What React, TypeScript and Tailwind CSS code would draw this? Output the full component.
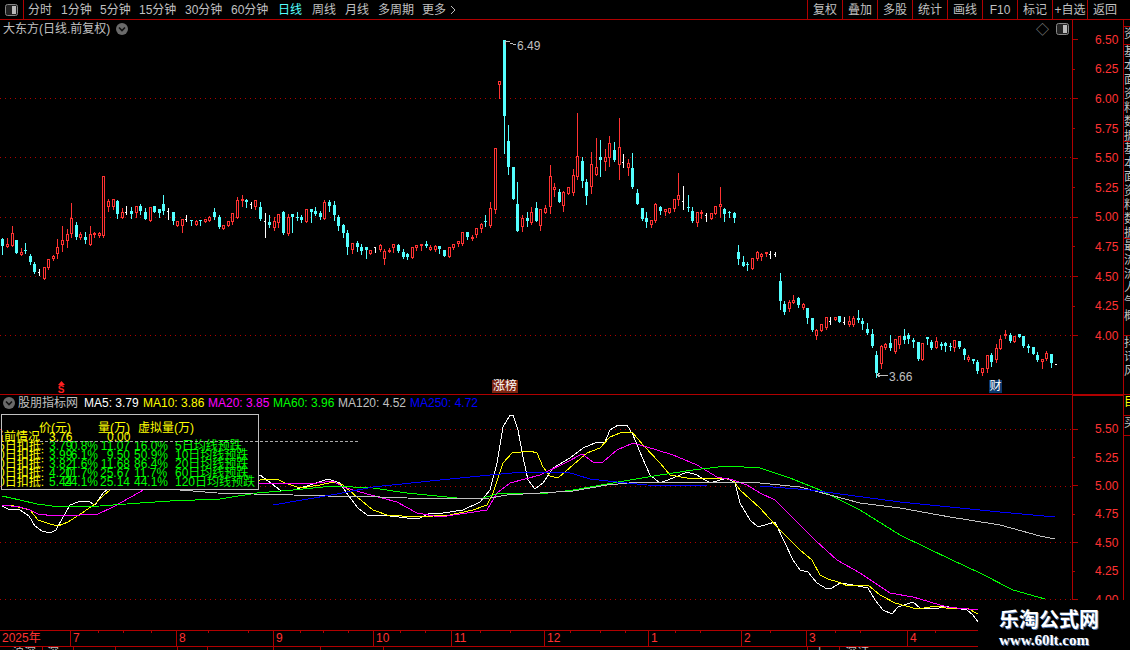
import React from 'react';

type Row = { label: string; price: string; pct: string; vol: string; pct2: string; name: string };

// one candle per line group: type wickTop bodyTop bodyBottom wickBottom (page pixels)
const candleData = `c 238 239 246 254|r 238 244 247 247|r 226 233 246 246|c 240 240 253 253|r 248 252 255 255|c 243 250 251 253|c 254 256 262 264|c 262 264 272 273|w 269 272 272 275|r 267 267 279 279
r 259 259 268 269|r 255 256 259 260|r 239 247 254 258|r 226 240 245 251|r 229 234 241 247|r 203 218 234 237|c 222 225 237 239|r 232 234 238 239|c 232 237 240 243|r 226 234 245 245
r 232 233 235 237|r 232 233 236 237|r 176 176 236 237|r 199 201 207 211|r 199 199 207 209|c 200 201 214 218|r 208 212 218 218|w 206 212 212 214|c 207 211 214 218|r 206 206 213 217
c 204 206 211 214|c 208 212 219 219|r 207 207 221 221|c 206 206 212 212|c 209 209 213 217|c 195 204 211 214|w 208 211 211 219|c 212 212 221 224|r 221 221 226 226|r 219 219 226 232
w 215 219 219 221|c 220 220 221 225|r 220 221 225 225|c 220 220 221 225|r 219 219 222 222|r 216 217 221 221|c 208 212 217 219|c 215 217 227 228|r 225 225 229 229|r 221 221 226 226
r 213 213 222 224|r 197 200 218 218|r 195 199 201 206|c 199 200 202 207|w 202 204 204 208|r 200 200 207 209|c 202 207 219 220|w 213 221 221 237|c 215 222 225 227|r 217 221 228 230
r 214 214 223 227|c 211 212 233 234|r 214 217 234 235|c 214 214 217 232|c 212 217 218 220|c 215 217 220 222|r 209 209 222 222|c 209 209 212 222|c 207 211 214 215|c 211 213 217 219
r 200 202 219 219|c 200 202 206 211|c 201 205 215 220|c 215 217 226 230|c 224 225 233 237|c 230 233 247 254|r 243 243 250 253|c 241 243 247 251|c 244 247 251 254|c 247 247 250 258
r 250 250 254 254|w 247 247 248 252|r 244 245 250 251|r 249 251 259 264|r 248 250 252 252|r 244 244 248 252|c 244 245 251 252|c 249 252 257 258|c 253 254 257 259|r 247 247 258 258
r 245 245 248 250|r 244 244 246 250|c 241 244 246 247|r 245 247 250 250|r 245 246 250 251|c 246 246 249 253|c 250 250 256 256|r 247 247 257 257|r 244 244 248 249|r 241 241 244 246
r 232 232 244 245|c 232 232 237 239|r 235 237 239 240|r 228 228 235 237|r 223 224 229 232|c 215 221 222 226|r 202 208 226 227|r 148 148 210 213|r 81 81 85 98|c 40 40 116 153
c 125 141 167 174|c 167 167 199 199|c 182 204 231 231|r 215 218 227 231|c 212 218 221 226|r 207 212 223 224|c 202 208 221 221|r 209 209 226 230|r 205 208 213 213|r 165 176 207 213
r 183 187 190 196|c 189 192 202 202|r 191 192 206 211|r 187 187 194 194|r 169 175 193 195|r 113 156 177 179|c 157 161 181 187|c 179 182 196 204|r 152 164 187 193|r 138 167 175 175
c 140 157 160 176|r 149 157 162 170|r 136 143 158 166|c 142 150 160 161|r 118 147 165 179|w 154 162 162 167|r 159 163 168 175|c 153 168 187 188|c 189 193 204 204|c 208 208 219 220
c 212 218 222 227|r 220 220 225 227|r 203 204 221 222|c 206 207 211 214|r 209 209 212 215|r 208 208 213 213|r 199 199 209 211|r 173 195 200 205|w 186 201 201 209|c 195 207 208 211
c 207 211 221 222|r 212 212 223 226|r 210 212 214 218|w 213 215 215 221|r 213 213 219 219|r 206 206 214 214|r 187 204 207 217|c 208 209 214 221|c 211 212 213 217|c 212 213 218 222
c 245 252 259 264|c 256 262 266 266|c 262 264 265 270|r 258 258 269 269|r 251 252 259 260|r 253 254 257 260|r 252 252 254 256|w 251 254 254 258|w 252 254 254 256|c 273 281 301 309
c 301 304 312 314|r 300 302 309 311|r 295 300 303 303|c 297 298 305 307|r 303 304 308 309|c 308 308 318 323|c 318 318 330 331|r 329 330 336 339|r 324 324 331 331|r 317 317 328 329
w 317 321 321 324|r 317 317 320 320|c 316 316 322 322|w 317 322 323 324|r 316 321 325 326|r 316 318 325 326|c 310 318 320 322|c 318 321 324 329|c 323 329 333 334|c 329 334 346 347
c 351 355 373 377|r 345 346 364 368|r 343 344 348 349|c 335 343 348 350|r 339 339 352 353|r 336 336 345 348|c 329 336 340 343|c 333 335 339 343|c 338 340 342 347|c 342 342 359 360
r 343 343 360 360|c 337 337 339 344|c 340 342 348 349|r 337 341 348 348|c 342 344 346 349|c 342 343 346 351|c 343 346 347 350|r 340 340 348 351|c 341 341 347 348|c 348 349 355 359
r 355 357 360 361|c 359 359 361 363|c 360 362 371 373|r 368 368 373 375|r 355 355 369 372|c 353 355 362 366|r 344 348 360 362|r 335 339 349 349|r 330 334 336 338|c 333 335 341 342
r 336 336 342 342|c 334 334 337 337|c 336 336 346 347|c 344 346 348 352|c 347 347 354 354|c 352 355 360 361|r 359 359 362 368|r 351 353 359 360|c 354 354 363 367|w 364 364 364 364`;

const candles = candleData
  .split(/[|\n]/)
  .map((c) => c.trim().split(' '))
  .map(([type, hi, top, bottom, lo], i) => ({
    type,
    x: Math.round(2.3 + 4.6 * i),
    hi: +hi,
    top: +top,
    bottom: +bottom,
    lo: +lo,
  }));

const lines: { color: string; points: string }[] = [
  {
    color: '#ffffff',
    points:
      '2,506 8,509 20,510 29,516 35,526 42,531 50,533 56,530 62,519 70,505 78,502 88,501 95,505 103,493 120,480 260,475 280,490 290,491 310,485 328,479 340,483 348,495 358,508 367,515 390,516 407,518 420,518 430,513 443,513 463,510 480,502 490,490 497,463 503,427 510,415 513,415 518,430 523,457 528,480 535,489 543,483 553,468 570,458 583,448 595,443 605,442 610,430 618,425 627,425 633,435 642,457 650,475 660,483 673,478 687,472 697,475 710,483 727,478 735,483 740,503 750,520 758,527 775,522 793,560 800,570 808,572 817,583 827,589 832,588 840,583 853,585 868,588 875,600 883,610 892,614 898,607 913,602 920,608 937,609 943,606 967,610 973,615 978,622',
  },
  {
    color: '#ffff00',
    points:
      '2,505 10,505 30,510 38,520 50,524 58,526 68,522 82,513 95,504 103,496 110,490 125,480 260,480 277,479 285,483 300,488 320,485 333,482 343,485 357,497 373,510 387,515 417,517 450,515 473,510 487,505 493,493 503,463 512,453 530,451 537,453 543,467 550,476 558,478 573,465 587,453 600,448 610,437 620,433 632,432 643,445 660,463 670,475 687,478 720,478 733,480 740,490 760,508 780,530 800,550 812,560 820,575 828,579 838,582 848,586 868,585 880,595 895,603 917,609 937,606 950,609 967,608 978,614',
  },
  {
    color: '#ff00ff',
    points:
      '2,505 20,507 30,510 38,514 55,516 80,515 98,514 113,507 140,492 155,482 260,484 290,483 317,483 333,481 343,487 367,494 397,502 417,513 440,517 467,513 487,510 497,493 510,483 540,475 567,462 582,454 593,462 603,462 617,450 633,443 657,450 673,455 697,465 717,477 733,480 747,485 760,493 775,500 790,515 815,540 837,560 860,573 890,593 913,597 947,607 978,610',
  },
  {
    color: '#00ff00',
    points:
      '2,496 20,500 37,504 60,507 100,506 140,503 170,501 220,499 257,493 293,490 333,486 373,488 407,493 457,498 483,498 500,493 527,493 540,494 573,490 607,484 630,480 660,475 693,470 727,466 760,468 790,478 820,490 860,510 900,535 952,560 980,573 1013,590 1045,599',
  },
  {
    color: '#c0c0c0',
    points:
      '180,490 193,491 217,493 253,494 293,495 327,496 380,497 407,498 443,499 490,498 507,495 540,493 573,491 607,485 640,482 673,482 760,483 800,487 860,503 900,508 950,517 1000,525 1040,536 1055,539',
  },
  {
    color: '#0000ff',
    points:
      '273,505 337,494 373,487 440,480 490,475 523,472 567,472 590,479 617,482 647,485 707,486 760,486 810,490 900,502 1000,512 1055,517',
  },
];

const maLabels = [
  ['MA5: 3.79', 'text-white', 'w-[59px]'],
  ['MA10: 3.86', 'text-[#ffff00]', 'w-[65px]'],
  ['MA20: 3.85', 'text-[#ff00ff]', 'w-[65px]'],
  ['MA60: 3.96', 'text-[#00ff00]', 'w-[65px]'],
  ['MA120: 4.52', 'text-[#c0c0c0]', 'w-[72px]'],
  ['MA250: 4.72', 'text-[#0000ff]', 'w-[72px]'],
];

const rows: Row[] = [
  { label: '5日扣抵:', price: '3.79', pct: '0.8%', vol: '11.07', pct2: '16.0%', name: '5日均线预跌' },
  { label: '10日扣抵:', price: '3.99', pct: '6.1%', vol: '9.50', pct2: '50.9%', name: '10日均线预跌' },
  { label: '20日扣抵:', price: '3.82', pct: '1.6%', vol: '11.68', pct2: '86.4%', name: '20日均线预跌' },
  { label: '60日扣抵:', price: '4.20', pct: '11.7%', vol: '25.67', pct2: '11.7%', name: '60日均线预跌' },
  { label: '120日扣抵:', price: '5.44', pct: '24.1%', vol: '25.14', pct2: '44.1%', name: '120日均线预跌' },
];

const periods = [
  ['分时', 'w-[33px]'],
  ['1分钟', 'w-[39px]'],
  ['5分钟', 'w-[39px]'],
  ['15分钟', 'w-[46px]'],
  ['30分钟', 'w-[46px]'],
  ['60分钟', 'w-[47px]'],
  ['日线', 'w-[34px] text-[#54ffff]'],
  ['周线', 'w-[33px]'],
  ['月线', 'w-[33px]'],
  ['多周期', 'w-[44px]'],
  ['更多', 'w-[28px]'],
];

const tools = ['复权', '叠加', '多股', '统计', '画线', 'F10', '标记', '+自选', '返回'];

const months = [
  ['2025年', 'w-[70px]'],
  ['7', 'w-[106px]'],
  ['8', 'w-[97px]'],
  ['9', 'w-[100px]'],
  ['10', 'w-[78px]'],
  ['11', 'w-[93px]'],
  ['12', 'w-[104px]'],
  ['1', 'w-[93px]'],
  ['2', 'w-[65px]'],
  ['3', 'w-[101px]'],
  ['4', 'flex-1'],
];

const dateTicks = [98, 123, 151, 208, 248, 323, 348, 300, 400, 425, 480, 510, 570, 600, 625, 675, 700, 770, 835, 860, 935];

const upperAxis = ['6.50', '6.25', '6.00', '5.75', '5.50', '5.25', '5.00', '4.75', '4.50', '4.25', '4.00'];
const lowerAxis = ['5.50', '5.25', '5.00', '4.75', '4.50', '4.25', '4.00'];

const PanelIcon = ({ className }: { className: string }) => (
  <svg className={className} width="13" height="12" viewBox="0 0 13 12">
    <rect x="0.5" y="0.5" width="12" height="11" rx="2" fill="#222" stroke="#888" />
    <rect x="7" y="2" width="4" height="8" fill="#bbb" />
  </svg>
);

const ChevronCircle = () => (
  <svg width="12" height="12" viewBox="0 0 12 12">
    <circle cx="6" cy="6" r="6" fill="#6a6a6a" />
    <path d="M3 4.5 L6 7.5 L9 4.5" fill="none" stroke="#111" strokeWidth="1.6" />
  </svg>
);

const Candles = () => (
  <>
    {candles.map((c, i) => {
      const color = c.type === 'r' ? '#ff3232' : c.type === 'c' ? '#54ffff' : '#ffffff';
      return (
        <g key={i}>
          <line x1={c.x + 0.5} x2={c.x + 0.5} y1={c.hi} y2={c.lo + 1} stroke={color} />
          {c.type === 'r' && (
            <rect x={c.x - 0.5} y={c.top + 0.5} width={2} height={Math.max(c.bottom - c.top - 1, 1)} fill="#000" stroke={color} />
          )}
          {c.type === 'c' && <rect x={c.x - 1} y={c.top} width={3} height={Math.max(c.bottom - c.top, 1)} fill={color} />}
          {c.type === 'w' && <rect x={c.x - 1} y={c.top} width={2} height={1} fill={color} />}
        </g>
      );
    })}
  </>
);

const Grid = ({ ys }: { ys: number[] }) => (
  <>
    {ys.map((y) => (
      <line key={y} x1={0} x2={1072} y1={y + 0.5} y2={y + 0.5} stroke="#b00000" strokeDasharray="1 4" />
    ))}
  </>
);

const UpperPane = () => (
  <div className="relative h-[375px] border-b border-[#b00000]">
    <svg className="block" width="1072" height="374" viewBox="0 20 1072 374" shapeRendering="crispEdges">
      <Grid ys={[98, 157, 217, 276, 335]} />
      <Candles />
      <path d="M505 41 L510 41 M505 41 L505 45 M510 43 L516 45" fill="none" stroke="#c0c0c0" />
      <path d="M877 375 L888 375 M877 375 L880 373 M877 375 L880 377" fill="none" stroke="#c0c0c0" />
      <text x="517" y="50" fontSize="12" fill="#c0c0c0">6.49</text>
      <text x="889" y="381" fontSize="12" fill="#c0c0c0">3.66</text>
    </svg>
    <div className="absolute left-0 right-0 top-0 flex items-center h-[18px] pl-[3px] pr-[3px] text-[12px] text-[#c0c0c0]">
      <span className="mr-[6px] whitespace-nowrap">大东方(日线.前复权)</span>
      <ChevronCircle />
      <span className="ml-auto mr-[7px] text-[13px] text-[#888] leading-none">◇</span>
      <PanelIcon className="" />
    </div>
    <div className="absolute left-[56px] top-[361px] w-[10px] h-[13px] flex flex-col items-center text-[#ff2020] text-[10px] font-bold leading-[9px]">
      <svg width="7" height="4" viewBox="0 0 7 4" className="shrink-0"><path d="M3.5 0 L7 4 L0 4 Z" fill="#ff2020" /></svg>
      <span>S</span>
    </div>
    <div className="absolute left-[492px] top-[360px] w-[26px] h-[13px] bg-[#7c2410] text-[12px] leading-[13px] text-white text-center">涨榜</div>
    <div className="absolute left-[989px] top-[360px] w-[13px] h-[13px] bg-[#0b3a6e] text-[12px] leading-[13px] text-white text-center">财</div>
  </div>
);

const LowerPane = () => (
  <div className="relative h-[235px]">
    <svg className="block" width="1072" height="235" viewBox="0 395 1072 235" shapeRendering="crispEdges">
      <Grid ys={[429, 486, 542, 599]} />
      {lines.map((l) => (
        <polyline key={l.color} points={l.points} fill="none" stroke={l.color} />
      ))}
    </svg>
    <div className="absolute left-[3px] top-0 flex items-center h-[16px] text-[12px] whitespace-nowrap">
      <ChevronCircle />
      <span className="ml-[3px] w-[66px] text-[#c0c0c0]">股朋指标网</span>
      {maLabels.map(([text, color, width]) => (
        <span key={text} className={`${color} ${width}`}>{text}</span>
      ))}
    </div>
    <div className="absolute left-[1px] top-[19px] w-[258px] h-[76px] border border-[#c0c0c0] bg-black overflow-hidden pt-[9px] text-[12px] leading-[9px] whitespace-nowrap">
      <div className="flex h-[9px] text-[#ffff00]">
        <span className="ml-[37px] w-[59px]">价(元)</span>
        <span className="w-[40px]">量(万)</span>
        <span>虚拟量(万)</span>
      </div>
      <div className="flex h-[9px] text-[#ffff00]">
        <span className="w-[47px] flex justify-end pr-[9px]">当前情况</span>
        <span className="w-[58px]">3.76</span>
        <span className="w-[23px] text-right">0.00</span>
      </div>
      {rows.map((r) => (
        <div key={r.label} className="flex h-[9px]">
          <span className="w-[47px] flex justify-end pr-[5px] text-[#ffff00]">{r.label}</span>
          <span className="w-[23px] text-[#00ff00]">{r.price}</span>
          <span className="w-[26px] flex justify-end text-[#00ff00]">{r.pct}</span>
          <span className="w-[32px] text-right text-[#00ff00]">{r.vol}</span>
          <span className="ml-[4px] w-[34px] text-[#00ff00]">{r.pct2}</span>
          <span className="ml-[7px] text-[#00ff00]">{r.name}</span>
        </div>
      ))}
    </div>
    <div className="absolute left-[40px] top-[46px] w-[318px] h-0 border-t border-dashed border-[#aaaaaa]" />
  </div>
);

const DateBar = () => (
  <div className="relative flex h-[17px] border-y border-[#b00000] text-[12px] leading-[15px] text-[#ff3232]">
    {months.map(([label, width], i) => (
      <div key={label} className={`${width} ${i > 0 ? 'border-l border-[#b00000] pl-[2px]' : 'pl-[2px]'}`}>{label}</div>
    ))}
    <svg className="absolute left-0 top-0" width="1072" height="3">
      {dateTicks.map((x) => (
        <line key={x} x1={x + 0.5} x2={x + 0.5} y1={0} y2={2} stroke="#b00000" />
      ))}
    </svg>
  </div>
);

const Axis = ({ labels, step, big }: { labels: string[]; step: string; big: number }) => (
  <>
    {labels.map((label, i) => (
      <div key={label} className={`flex items-center ${step}`}>
        <span className={`h-px bg-[#b00000] ${i % 2 === big ? 'w-[5px]' : 'w-[2px]'}`} />
        <span className={`text-[12px] text-[#ff3232] ${i % 2 === big ? 'ml-[17px]' : 'ml-[20px]'}`}>{label}</span>
      </div>
    ))}
  </>
);

const sideCells = [
  ['h-[7px]', ''],
  ['h-[18px]', '资'],
  ['h-[97px]', '基本面资料数据'],
  ['h-[97px]', '基本面资料数据'],
  ['h-[97px]', '最流流人气概'],
  ['h-[59px]', '抖讯风'],
  ['h-[21px] text-[#ffff00]', '目'],
  ['h-[20px]', '买'],
];

const SideStrip = () => (
  <div className="w-[6px] overflow-hidden text-[12px] leading-[14px] text-[#c0c0c0]">
    {sideCells.map(([cls, text], i) => (
      <div key={i} className={`${cls} border-b border-[#b00000] overflow-hidden`}>
        {text.split('').map((ch, j) => (
          <div key={j}>{ch}</div>
        ))}
      </div>
    ))}
  </div>
);

const App: React.FC = () => {
  return (
    <div className="relative w-[1130px] h-[650px] bg-black overflow-hidden flex flex-col font-['Liberation_Sans','Noto_Sans_CJK_SC',sans-serif]">
      <div className="flex h-[20px] shrink-0 border-b border-[#b00000] text-[12px] text-[#c0c0c0]">
        <div className="w-[24px] flex items-center justify-center border-r border-[#b00000]">
          <PanelIcon className="" />
        </div>
        <div className="flex items-center pl-[4px] whitespace-nowrap">
          {periods.map(([name, cls]) => (
            <span key={name} className={cls}>{name}</span>
          ))}
          <svg width="6" height="10" viewBox="0 0 6 10"><path d="M1 1 L5 5 L1 9" fill="none" stroke="#c0c0c0" /></svg>
        </div>
        <div className="ml-auto flex mr-[8px]">
          {tools.map((t) => (
            <div key={t} className="w-[35px] flex items-center justify-center border-l border-[#b00000] whitespace-nowrap">{t}</div>
          ))}
        </div>
      </div>
      <div className="flex flex-1 min-h-0">
        <div className="w-[1072px]">
          <UpperPane />
          <LowerPane />
          <DateBar />
          <div className="flex h-[3px] overflow-hidden text-[12px] leading-[12px] text-[#c0c0c0]">
            <div className="w-[42px] pl-[12px]">沪深</div>
            <div className="w-[31px] border-l border-[#b00000] pl-[4px]">深</div>
            <div className="w-[42px] border-l border-[#b00000]" />
            <div className="w-[62px] border-l border-[#b00000]" />
            <div className="w-[30px] border-l border-[#b00000]" />
            <div className="w-[66px] border-l border-[#b00000]" />
            <div className="w-[47px] border-l border-[#b00000]" />
            <div className="w-[63px] border-l border-[#b00000]" />
            <div className="w-[424px] border-l border-[#b00000]" />
            <div className="w-[32px] border-l border-[#b00000] pl-[6px]">上</div>
            <div className="flex-1 border-l border-[#b00000] pl-[5px]">深证</div>
          </div>
        </div>
        <div className="w-[52px] border-x border-[#b00000] flex flex-col">
          <div className="h-[375px] border-b border-[#b00000] pt-[5px]">
            <Axis labels={upperAxis} step="h-[29.6px]" big={0} />
          </div>
          <div className="flex-1 pt-[19px] border-t border-[#b00000]">
            <Axis labels={lowerAxis} step="h-[28.4px]" big={0} />
          </div>
        </div>
        <SideStrip />
      </div>
      <div className="absolute right-0 bottom-0 w-[152px] h-[50px] bg-black text-white font-bold pl-[21px]">
        <div className="mt-[8px] text-[20px] leading-[24px] [text-shadow:1px_1px_0_#4a6fa8]">乐淘公式网</div>
        <div className="mt-[1px] text-[15px] leading-[14px] font-['Liberation_Serif',serif] [text-shadow:1px_1px_0_#4a6fa8]">www.60lt.com</div>
      </div>
    </div>
  );
};

export default App;
